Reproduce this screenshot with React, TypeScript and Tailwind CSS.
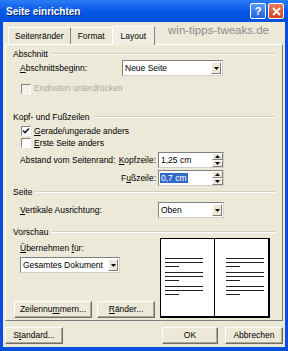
import React from "react";

const font = "font-['Liberation_Sans',Arial,sans-serif]";

function U({ children }: { children: React.ReactNode }) {
  return <span className="underline underline-offset-[1px]">{children}</span>;
}

function GroupLabel({ label }: { label: string }) {
  return (
    <div className="flex items-center h-[10px] leading-[10px] pl-[7px] pr-[7px]">
      <span className="text-black whitespace-nowrap pr-[4px]">{label}</span>
      <div className="flex-1 border-t border-[#d0d0bf] border-b border-b-white" />
    </div>
  );
}

function Checkbox({ checked, disabled }: { checked?: boolean; disabled?: boolean }) {
  return (
    <div
      className={`w-[10px] h-[10px] border border-t-[#808080] border-l-[#808080] border-b-white border-r-white flex items-center justify-center ${
        disabled ? "bg-[#f0efe8]" : "bg-white"
      }`}
    >
      {checked && (
        <svg width="8" height="8" viewBox="0 0 8 8">
          <path d="M1 3.5 L3 5.5 L7 1.5" stroke="#1a1a1a" strokeWidth="1.6" fill="none" />
        </svg>
      )}
    </div>
  );
}

function Dropdown({ value, width }: { value: string; width: string }) {
  return (
    <div className={`${width} h-[16px] border border-t-[#808080] border-l-[#808080] border-b-[#d4d0c8] border-r-[#d4d0c8] bg-white flex items-center`}>
      <span className="flex-1 pl-[2px] text-black whitespace-nowrap">{value}</span>
      <div className="w-[10px] h-[12px] mr-[1px] bg-[#ece9d8] border border-t-white border-l-white border-b-[#808080] border-r-[#808080] flex items-center justify-center">
        <svg width="5" height="3" viewBox="0 0 5 3">
          <path d="M0 0 H5 L2.5 3 Z" fill="#000" />
        </svg>
      </div>
    </div>
  );
}

function Spinner({ value, selected }: { value: string; selected?: boolean }) {
  return (
    <div className="w-[66px] h-[16px] border border-t-[#808080] border-l-[#808080] border-b-[#d4d0c8] border-r-[#d4d0c8] bg-white flex items-center">
      <div className="flex-1 pl-[1px]">
        <span className={selected ? "bg-[#316ac5] text-white px-[1px]" : "text-black pl-[1px]"}>{value}</span>
      </div>
      <div className="w-[11px] h-[14px] flex flex-col">
        <div className="flex-1 bg-[#ece9d8] border border-t-white border-l-white border-b-[#808080] border-r-[#808080] flex items-center justify-center">
          <svg width="5" height="3" viewBox="0 0 5 3">
            <path d="M0 3 H5 L2.5 0 Z" fill="#000" />
          </svg>
        </div>
        <div className="flex-1 bg-[#ece9d8] border border-t-white border-l-white border-b-[#808080] border-r-[#808080] flex items-center justify-center">
          <svg width="5" height="3" viewBox="0 0 5 3">
            <path d="M0 0 H5 L2.5 3 Z" fill="#000" />
          </svg>
        </div>
      </div>
    </div>
  );
}

function Button({ children, width }: { children: React.ReactNode; width: string }) {
  return (
    <div
      className={`${width} h-[17px] border border-t-white border-l-white border-b-[#716f64] border-r-[#716f64] bg-[#ece9d8] shadow-[inset_-1px_-1px_0_#aca899] flex items-center justify-center text-black whitespace-nowrap`}
    >
      {children}
    </div>
  );
}

function PageLines() {
  const groups = [0, 1, 2];
  return (
    <div className="flex flex-col gap-[5px] pt-[19px] px-[4px]">
      {groups.map((g) => (
        <div key={g} className="flex flex-col gap-[3px]">
          <div className="h-[1px] w-[38px] bg-[#222]" />
          <div className="h-[1px] w-[38px] bg-[#222]" />
          <div className="h-[1px] w-[14px] bg-[#222]" />
        </div>
      ))}
    </div>
  );
}

export default function App() {
  return (
    <div className={`w-[288px] h-[351px] bg-[#0a4ee0] flex flex-col ${font} text-[8.5px] overflow-hidden`}>
      {/* title bar */}
      <div className="h-[22px] bg-gradient-to-b from-[#2a7cf4] via-[#0558e6] to-[#0450dc] flex items-center pl-[6px] pr-[4px]">
        <span className="text-white font-bold text-[10px] [text-shadow:1px_1px_0_#0a2a7a] flex-1">
          Seite einrichten
        </span>
        <div className="w-[16px] h-[16px] rounded-[2px] border border-white bg-gradient-to-b from-[#5a9af8] to-[#2463d8] flex items-center justify-center text-white font-bold text-[11px] leading-none">
          ?
        </div>
        <div className="w-[16px] h-[16px] ml-[2px] rounded-[2px] border border-white bg-gradient-to-b from-[#ee7a55] to-[#d2411c] flex items-center justify-center">
          <svg width="9" height="9" viewBox="0 0 9 9">
            <path d="M1 1 L8 8 M8 1 L1 8" stroke="#fff" strokeWidth="1.8" />
          </svg>
        </div>
      </div>

      {/* body */}
      <div className="flex-1 mx-[3px] mb-[4px] bg-[#ece9d8] flex flex-col px-[2px]">
        {/* tabs */}
        <div className="flex items-end h-[22px] pl-[3px]">
          <div className="h-[17px] px-[6px] flex items-center border-t border-l border-white border-r border-r-[#808080]">Seitenränder</div>
          <div className="h-[17px] px-[7px] flex items-center border-t border-white">Format</div>
          <div className="h-[19px] px-[8px] flex items-center bg-[#f1efe4] border-t border-l border-white border-r border-r-[#808080] -mb-[1px] relative">
            Layout
          </div>
          <span className="ml-auto mr-[14px] mb-[5px] text-[11.5px] text-[#8c8c8c] whitespace-nowrap">
            win-tipps-tweaks.de
          </span>
        </div>

        {/* panel */}
        <div className="h-[277px] border border-t-white border-l-white border-b-[#808080] border-r-[#808080] flex flex-col">
          <div className="mt-[4px]">
            <GroupLabel label="Abschnitt" />
          </div>
          <div className="mt-[1px] h-[16px] flex items-center pl-[14px]">
            <span className="w-[102px]">
              <U>A</U>bschnittsbeginn:
            </span>
            <Dropdown value="Neue Seite" width="w-[101px]" />
          </div>
          <div className="mt-[6px] h-[13px] flex items-center pl-[15px] gap-[3px] text-[#aca899]">
            <Checkbox disabled />
            <span>Endnoten unterdrücken</span>
          </div>

          <div className="mt-[17px]">
            <GroupLabel label="Kopf- und Fußzeilen" />
          </div>
          <div className="mt-[3px] h-[12px] flex items-center pl-[15px] gap-[3px]">
            <Checkbox checked />
            <span>
              <U>G</U>erade/ungerade anders
            </span>
          </div>
          <div className="h-[12px] flex items-center pl-[15px] gap-[3px]">
            <Checkbox />
            <span>
              <U>E</U>rste Seite anders
            </span>
          </div>
          <div className="mt-[3px] h-[16px] flex items-center pl-[14px]">
            <span className="w-[98px]">Abstand vom Seitenrand:</span>
            <span className="w-[40px] text-right pr-[2px]">
              <U>K</U>opfzeile:
            </span>
            <Spinner value="1,25 cm" />
          </div>
          <div className="mt-[2px] h-[16px] flex items-center pl-[14px]">
            <span className="w-[138px] text-right pr-[2px]">
              F<U>u</U>ßzeile:
            </span>
            <Spinner value="0,7 cm" selected />
          </div>

          <div className="mt-[1px]">
            <GroupLabel label="Seite" />
          </div>
          <div className="mt-[5px] h-[16px] flex items-center pl-[14px]">
            <span className="w-[138px]">
              <U>V</U>ertikale Ausrichtung:
            </span>
            <Dropdown value="Oben" width="w-[66px]" />
          </div>

          <div className="mt-[9px]">
            <GroupLabel label="Vorschau" />
          </div>
          <div className="flex flex-1 pb-[2px]">
            <div className="flex flex-col pl-[14px] w-[154px]">
              <div className="mt-[5px] h-[12px] flex items-center">
                <span>
                  <U>Ü</U>bernehmen <U>f</U>ür:
                </span>
              </div>
              <div className="mt-[3px]">
                <Dropdown value="Gesamtes Dokument" width="w-[100px]" />
              </div>
              <div className="mt-auto flex gap-[5px] -ml-[6px]">
                <Button width="w-[78px]">
                  Zeilennu<U>m</U>mern...
                </Button>
                <Button width="w-[58px]">
                  <U>R</U>änder...
                </Button>
              </div>
            </div>
            <div className="mt-[1px] w-[110px] h-[80px] bg-white border border-black border-r-2 border-b-2 flex">
              <div className="flex-1 border-r border-black">
                <PageLines />
              </div>
              <div className="flex-1 flex justify-end">
                <PageLines />
              </div>
            </div>
          </div>
        </div>

        {/* bottom buttons */}
        <div className="mt-[6px] flex items-center">
          <Button width="w-[58px]">
            S<U>t</U>andard...
          </Button>
          <div className="ml-auto flex gap-[7px]">
            <Button width="w-[56px]">OK</Button>
            <Button width="w-[58px]">Abbrechen</Button>
          </div>
        </div>
      </div>
    </div>
  );
}
